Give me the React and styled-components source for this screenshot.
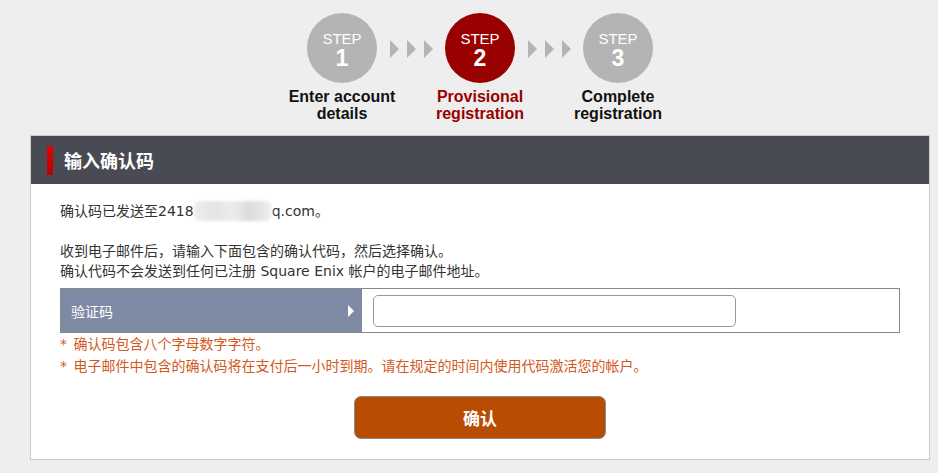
import React from "react";
import styled, { createGlobalStyle } from "styled-components";

const GlobalStyle = createGlobalStyle`
  html, body { margin: 0; padding: 0; background: #eeeeee; }
  body { font-family: "DejaVu Sans", "Noto Sans CJK SC", sans-serif; }
`;

const Page = styled.div`
  width: 900px;
  margin-left: 30px;
  padding-top: 13px;
`;

const Steps = styled.div`
  display: flex;
  justify-content: center;
  align-items: flex-start;
  height: 122px;
`;

const Step = styled.div`
  width: 70px;
  display: flex;
  flex-direction: column;
  align-items: center;
`;

const Circle = styled.div`
  width: 70px;
  height: 70px;
  border-radius: 50%;
  background: ${(p) => (p.$active ? "#990000" : "#b4b4b4")};
  color: #fff;
  display: flex;
  flex-direction: column;
  align-items: center;
  justify-content: center;
  padding-top: 4px;
  box-sizing: border-box;
  font-family: "Liberation Sans", Arial, sans-serif;
`;

const StepWord = styled.span`
  font-size: 15px;
  line-height: 16px;
`;

const StepNum = styled.span`
  font-size: 23px;
  font-weight: bold;
  line-height: 23px;
`;

const StepLabel = styled.div`
  width: 150px;
  margin-top: 5px;
  text-align: center;
  font-family: "Liberation Sans", Arial, sans-serif;
  font-weight: bold;
  font-size: 16px;
  line-height: 17px;
  color: ${(p) => (p.$active ? "#990000" : "#111")};
`;

const Arrows = styled.div`
  width: 68px;
  height: 70px;
  display: flex;
  align-items: center;
  justify-content: center;
  gap: 8px;
`;

const Arrow = styled.span`
  width: 0;
  height: 0;
  border-top: 9px solid transparent;
  border-bottom: 9px solid transparent;
  border-left: 9px solid #b4b4b4;
  margin-top: 1px;
`;

const Panel = styled.div`
  border: 1px solid #cccccc;
  background: #fff;
`;

const PanelHeader = styled.div`
  height: 48px;
  background: #484b53;
  display: flex;
  align-items: center;
  padding-left: 16px;
  gap: 11px;
`;

const RedBar = styled.span`
  width: 6px;
  height: 29px;
  border-radius: 1px;
  background: linear-gradient(#e80000, #b80000);
`;

const Title = styled.h2`
  margin: 0;
  color: #fff;
  font-family: "Noto Sans CJK SC", sans-serif;
  font-size: 18px;
  font-weight: bold;
  line-height: 24px;
`;

const PanelBody = styled.div`
  padding: 17px 29px 20px 29px;
`;

const Para = styled.p`
  margin: 0 0 ${(p) => p.$gap || 0}px;
  font-size: 14px;
  line-height: 20px;
  color: #333;
`;

const Blur = styled.span`
  display: inline-block;
  width: 78px;
  height: 20px;
  vertical-align: -5px;
  border-radius: 6px;
  background: linear-gradient(90deg, #eeeeee 0%, #e4e4e4 25%, #ececec 50%, #dcdcdc 70%, #e6e8ea 90%, #f2f2f2 100%);
  filter: blur(1.5px);
`;

const FormRow = styled.div`
  margin-top: 7px;
  display: flex;
  border: 1px solid #888;
  height: 43px;
`;

const LabelCell = styled.div`
  width: 301px;
  background: #7f8ba5;
  color: #fff;
  display: flex;
  align-items: center;
  justify-content: space-between;
  padding: 0 8px 0 10px;
  box-sizing: border-box;
  font-size: 14px;
`;

const LabelArrow = styled.span`
  width: 0;
  height: 0;
  border-top: 6px solid transparent;
  border-bottom: 6px solid transparent;
  border-left: 6px solid #fff;
`;

const InputCell = styled.div`
  flex: 1;
  display: flex;
  align-items: center;
  padding-left: 11px;
`;

const TextInput = styled.input`
  width: 363px;
  height: 32px;
  box-sizing: border-box;
  border: 1px solid #999;
  border-radius: 5px;
  background: #fff;
  outline: none;
  font-size: 14px;
  padding: 0 8px;
`;

const Note = styled.p`
  margin: 0;
  font-size: 14px;
  line-height: 22px;
  color: #d2581c;
  word-spacing: 2px;
`;

const ButtonRow = styled.div`
  display: flex;
  justify-content: center;
  margin-top: 19px;
`;

const Button = styled.button`
  width: 252px;
  height: 43px;
  border: 1px solid #8a8a8a;
  border-radius: 7px;
  background: #b84c00;
  color: #fff;
  font-family: "Noto Sans CJK SC", sans-serif;
  font-size: 17px;
  font-weight: bold;
  cursor: pointer;
`;

const steps = [
  { n: 1, label: ["Enter account", "details"] },
  { n: 2, label: ["Provisional", "registration"], active: true },
  { n: 3, label: ["Complete", "registration"] },
];

export default function App() {
  return (
    <>
      <GlobalStyle />
      <Page>
        <Steps>
          {steps.map((s, i) => (
            <React.Fragment key={s.n}>
              {i > 0 && (
                <Arrows>
                  <Arrow />
                  <Arrow />
                  <Arrow />
                </Arrows>
              )}
              <Step>
                <Circle $active={s.active}>
                  <StepWord>STEP</StepWord>
                  <StepNum>{s.n}</StepNum>
                </Circle>
                <StepLabel $active={s.active}>
                  {s.label[0]}
                  <br />
                  {s.label[1]}
                </StepLabel>
              </Step>
            </React.Fragment>
          ))}
        </Steps>
        <Panel>
          <PanelHeader>
            <RedBar />
            <Title>输入确认码</Title>
          </PanelHeader>
          <PanelBody>
            <Para $gap={20}>
              确认码已发送至2418<Blur />q.com。
            </Para>
            <Para>收到电子邮件后，请输入下面包含的确认代码，然后选择确认。</Para>
            <Para>确认代码不会发送到任何已注册 Square Enix 帐户的电子邮件地址。</Para>
            <FormRow>
              <LabelCell>
                <span>验证码</span>
                <LabelArrow />
              </LabelCell>
              <InputCell>
                <TextInput type="text" />
              </InputCell>
            </FormRow>
            <Note>* 确认码包含八个字母数字字符。</Note>
            <Note>* 电子邮件中包含的确认码将在支付后一小时到期。请在规定的时间内使用代码激活您的帐户。</Note>
            <ButtonRow>
              <Button>确认</Button>
            </ButtonRow>
          </PanelBody>
        </Panel>
      </Page>
    </>
  );
}
